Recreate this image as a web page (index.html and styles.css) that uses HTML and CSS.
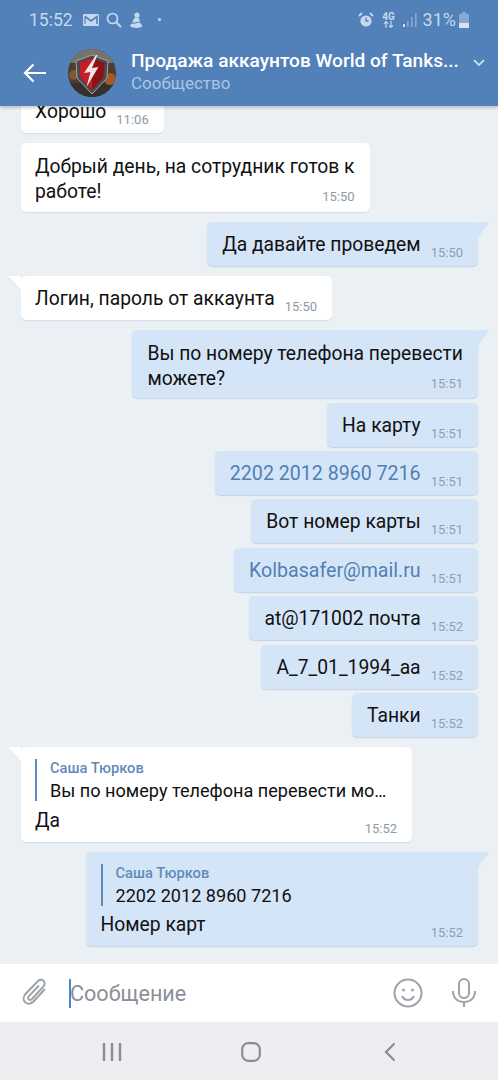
FILE: index.html
```html
<!DOCTYPE html>
<html lang="ru">
<head>
    <meta charset="UTF-8">
    <meta name="viewport" content="width=device-width, initial-scale=1.0">
    <title>Сообщения</title>
    <link rel="stylesheet" href="styles.css">
</head>
<body>
    <div class="app">
        <header class="header">
            <!-- Статус-бар -->
            <div class="status">
                <span class="status-time">15:52</span>
                <svg class="status-icon" width="16" height="12" viewBox="0 0 16 12"><path d="M1 0h14a1 1 0 0 1 1 1v10a1 1 0 0 1-1 1H1a1 1 0 0 1-1-1V1a1 1 0 0 1 1-1z" fill="#c6d8ee"/><path d="M2 2.500l6 4.500 6-4.500V10" fill="none" stroke="#5181b8" stroke-width="1.600"/><path d="M2 10V2.500" stroke="#5181b8" stroke-width="1.200"/></svg>
                <svg class="status-icon" width="16" height="16" viewBox="0 0 16 16"><circle cx="6.500" cy="6.500" r="5" fill="none" stroke="#c6d8ee" stroke-width="1.700"/><path d="M10 10l5 5" stroke="#c6d8ee" stroke-width="2"/></svg>
                <svg class="status-icon" width="14" height="16" viewBox="0 0 14 16"><circle cx="8" cy="3" r="2.600" fill="#c6d8ee"/><path d="M6.500 5.500h3c1 1.500 1.500 3.500 1.500 5l2.500 3.500c-1 1.300-3 2-6 2s-5.500-.7-6.500-2c.5-1.300 1.500-2.300 2.500-3 0-2 1-4 2.500-5.500z" fill="#c6d8ee"/><path d="M3 11.500l8-1.500" stroke="#5181b8" stroke-width="1"/></svg>
                <span class="status-dot"></span>
                <span class="status-spacer"></span>
                <svg class="status-icon" width="16" height="16" viewBox="0 0 16 16"><circle cx="8" cy="9" r="5.600" fill="#c6d8ee"/><path d="M8 5.500V9h2.600" fill="none" stroke="#5181b8" stroke-width="1.300"/><path d="M1 4l3-3M15 4l-3-3" stroke="#c6d8ee" stroke-width="1.800"/></svg>
                <span class="status-net">4G<svg width="11" height="7" viewBox="0 0 11 7"><path d="M3 7V1M1 2.600L3 .6l2 2M8 0v6M6 4.400l2 2 2-2" fill="none" stroke="#c6d8ee" stroke-width="1.200"/></svg></span>
                <svg class="status-icon" width="14" height="14" viewBox="0 0 14 14"><rect x="0" y="11" width="2" height="3" fill="#c6d8ee"/><rect x="4" y="8" width="1.600" height="6" fill="#86a8d2"/><rect x="8" y="4" width="1.600" height="10" fill="#86a8d2"/><rect x="12" y="0" width="1.600" height="14" fill="#86a8d2"/></svg>
                <span class="status-batt">31%</span>
                <svg width="10" height="16" viewBox="0 0 10 16"><path d="M3 0h4v2h3v14H0V2h3z" fill="#86a8d2"/><path d="M0 11h10v5H0z" fill="#d5e2f2"/></svg>
            </div>

            <!-- Шапка диалога -->
            <div class="toolbar">
                <svg class="back" width="24" height="20" viewBox="0 0 24 20"><path d="M23 10H2M10.500 1.500L2 10l8.500 8.500" fill="none" stroke="#fff" stroke-width="2.200"/></svg>
                <svg class="avatar" width="48" height="48" viewBox="0 0 48 48">
                    <defs><clipPath id="round"><circle cx="24" cy="24" r="24"/></clipPath></defs>
                    <g clip-path="url(#round)">
                        <rect width="48" height="48" fill="#4b3c34"/>
                        <rect width="48" height="14" fill="#77726e"/>
                        <rect y="34" width="48" height="14" fill="#35302c"/>
                        <circle cx="42" cy="30" r="6" fill="#a85a26"/>
                        <circle cx="6" cy="26" r="5" fill="#7d5a38"/>
                    </g>
                    <path d="M8 12l16-6 16 6-1 17-15 16-15-16z" fill="#4a4a4c" stroke="#a8a4a0" stroke-width="1"/>
                    <path d="M11.500 14l12.500-5 12.500 5-1 14-11.500 13-11.500-13z" fill="#8f1015"/>
                    <path d="M11.500 14l12.500-5v32l-11.500-13z" fill="#c41f26"/>
                    <path d="M28 6l-12 18 6.500-1-4 15 12-20-6.500 1 5.500-13z" fill="#ece6e2"/>
                </svg>
                <div class="peer">
                    <div class="peer-name">Продажа аккаунтов World of Tanks...</div>
                    <div class="peer-type">Сообщество</div>
                </div>
                <svg class="chevron" width="12" height="8" viewBox="0 0 12 8"><path d="M1 1l5 5 5-5" fill="none" stroke="#dbe6f3" stroke-width="1.700"/></svg>
            </div>
        </header>

        <main class="messages">
            <div class="msg in solid"><span class="text">Хорошо</span><span class="time">11:06</span></div>
            <div class="msg in solid stack"><span class="text">Добрый день, на сотрудник готов к<br>работе!</span><span class="time">15:50</span></div>
            <div class="msg out tail gap"><span class="text">Да давайте проведем</span><span class="time">15:50</span></div>
            <div class="msg in tail gap"><span class="text">Логин, пароль от аккаунта</span><span class="time">15:50</span></div>
            <div class="msg out tail gap stack"><span class="text">Вы по номеру телефона перевести<br>можете?</span><span class="time">15:51</span></div>
            <div class="msg out"><span class="text">На карту</span><span class="time">15:51</span></div>
            <div class="msg out"><span class="text link">2202 2012 8960 7216</span><span class="time">15:51</span></div>
            <div class="msg out"><span class="text">Вот номер карты</span><span class="time">15:51</span></div>
            <div class="msg out"><span class="text link">Kolbasafer@mail.ru</span><span class="time">15:51</span></div>
            <div class="msg out"><span class="text">at@171002 почта</span><span class="time">15:52</span></div>
            <div class="msg out"><span class="text">A_7_01_1994_aa</span><span class="time">15:52</span></div>
            <div class="msg out"><span class="text">Танки</span><span class="time">15:52</span></div>

            <div class="msg in tail gap wide-in reply-msg">
                <div class="reply">
                    <div class="reply-name">Саша Тюрков</div>
                    <div class="reply-text">Вы по номеру телефона перевести мо…</div>
                </div>
                <div class="reply-row"><span class="text">Да</span><span class="time">15:52</span></div>
            </div>
            <div class="msg out tail gap wide-out reply-msg">
                <div class="reply">
                    <div class="reply-name">Саша Тюрков</div>
                    <div class="reply-text">2202 2012 8960 7216</div>
                </div>
                <div class="reply-row"><span class="text">Номер карт</span><span class="time">15:52</span></div>
            </div>
        </main>

        <!-- Поле ввода -->
        <div class="composer">
            <svg class="clip" width="28" height="30" viewBox="0 0 28 30"><path d="M24 11L12.500 23.500c-2.500 2.700-6 3-8.300.8-2.300-2.200-2-5.800.5-8.500L16.500 3.500c1.800-2 4.400-2.200 6-.7 1.700 1.600 1.500 4.100-.3 6L11 21c-1 1.100-2.400 1.300-3.300.4-.9-.8-.8-2.200.2-3.300L18 7.500" fill="none" stroke="#9da3a9" stroke-width="2"/></svg>
            <div class="input"><span class="caret"></span>Сообщение</div>
            <svg class="smile" width="30" height="30" viewBox="0 0 30 30"><circle cx="15" cy="15" r="13.500" fill="none" stroke="#9da3a9" stroke-width="2"/><circle cx="10.500" cy="12" r="1.500" fill="#9da3a9"/><circle cx="19.500" cy="12" r="1.500" fill="#9da3a9"/><path d="M9 18c1.500 3 3.500 4 6 4s4.500-1 6-4" fill="none" stroke="#9da3a9" stroke-width="2"/></svg>
            <svg class="mic" width="26" height="30" viewBox="0 0 26 30"><rect x="8" y="1" width="10" height="19" rx="5" fill="none" stroke="#9da3a9" stroke-width="2"/><path d="M2 13c0 7 4.500 11 11 11s11-4 11-11M13 24v5" fill="none" stroke="#9da3a9" stroke-width="2"/></svg>
        </div>

        <!-- Навигация Android -->
        <nav class="navbar">
            <svg width="20" height="18" viewBox="0 0 20 18"><path d="M2 0v18M10 0v18M18 0v18" stroke="#8b8d91" stroke-width="2.400"/></svg>
            <svg class="nav-home" width="20" height="20" viewBox="0 0 20 20"><rect x="1.200" y="1.200" width="17.600" height="17.600" rx="6" fill="none" stroke="#8b8d91" stroke-width="2.200"/></svg>
            <svg width="12" height="20" viewBox="0 0 12 20"><path d="M10.500 1.500L2 10l8.500 8.500" fill="none" stroke="#8b8d91" stroke-width="2.200"/></svg>
        </nav>
    </div>
</body>
</html>
```

FILE: styles.css
```css
* {
    box-sizing: border-box;
}
body {
    margin: 0;
    background-color: #ebf0f5;
    font-family: Roboto, "Noto Sans", sans-serif;
}
.app {
    width: 498px;
    height: 1080px;
    display: flex;
    flex-direction: column;
    overflow: hidden;
}

/* header */
.header {
    height: 106px;
    flex: none;
    background-color: #5181b8;
    box-shadow: 0 2px 3px rgba(0, 0, 0, 0.2);
    position: relative;
    z-index: 2;
}
.status {
    height: 39px;
    padding: 0 29px;
    display: flex;
    align-items: center;
    color: #c6d8ee;
}
.status-time {
    font-size: 17.5px;
    margin-right: 10px;
}
.status-icon {
    margin-right: 7px;
}
.status-dot {
    width: 3px;
    height: 3px;
    border-radius: 50%;
    background-color: #c6d8ee;
    margin-left: 8px;
}
.status-spacer {
    flex: 1;
}
.status-net {
    font-size: 10px;
    font-weight: 700;
    line-height: 9px;
    width: 16px;
    margin-right: 6px;
    display: flex;
    flex-direction: column;
    align-items: center;
}
.status-batt {
    font-size: 18px;
    margin: 0 3px 0 -1px;
}
.toolbar {
    height: 67px;
    padding: 0 13px 0 23px;
    display: flex;
    align-items: center;
}
.back {
    flex: none;
    margin-right: 21px;
}
.avatar {
    flex: none;
    margin-right: 15px;
}
.peer {
    flex: 1;
    min-width: 0;
    margin-top: -3px;
}
.peer-name {
    color: #fff;
    font-size: 19.1px;
    font-weight: 500;
    line-height: 24px;
    white-space: nowrap;
}
.peer-type {
    color: #a9c5e6;
    font-size: 17px;
    line-height: 20px;
}
.chevron {
    flex: none;
    margin-top: -20px;
}

/* messages */
.messages {
    flex: 1;
    min-height: 0;
    padding: 0 20px 18px 21px;
    display: flex;
    flex-direction: column;
    align-items: flex-start;
    justify-content: flex-end;
    overflow: hidden;
}
.msg {
    flex: none;
    position: relative;
    display: flex;
    align-items: flex-end;
    gap: 10px;
    min-height: 44px;
    padding: 10px 15px 6px 15px;
    margin-top: 4.4px;
    border-radius: 5px;
    font-size: 19.3px;
    line-height: 26px;
    color: #111;
}
.msg.gap,
.msg.solid {
    margin-top: 10px;
}
.in {
    padding-left: 14px;
    background-color: #fff;
    box-shadow: 0 1px 1px rgba(160, 175, 195, 0.3);
}
.out {
    align-self: flex-end;
    background-color: #d5e5f8;
    box-shadow: 0 1px 1px rgba(130, 155, 190, 0.35);
}
.tail::before {
    content: "";
    position: absolute;
    top: 0;
    width: 13px;
    background-color: inherit;
}
.in.tail::before {
    left: -13px;
    height: 14px;
    clip-path: polygon(0 0, 100% 0, 100% 100%, 55% 50%);
}
.out.tail::before {
    right: -12px;
    height: 18px;
    clip-path: polygon(0 0, 100% 0, 45% 50%, 0 100%);
}
.text {
    align-self: flex-start;
}
.time {
    flex: none;
    color: #8f9aa5;
    font-size: 13px;
    line-height: 16px;
    margin-bottom: -1px;
    white-space: nowrap;
}
.out .time {
    color: #8f9fb0;
}
.link {
    color: #4f80b5;
    font-size: 19.6px;
}
.stack {
    display: block;
    padding-top: 11px;
    padding-bottom: 6.5px;
    line-height: 25px;
}
.stack > .time {
    display: block;
    text-align: right;
    margin: -15px 0 0;
}

/* reply */
.reply-msg {
    display: block;
    padding-top: 12px;
}
.wide-in {
    width: 391px;
}
.wide-out {
    width: 392px;
    padding-left: 14.5px;
}
.reply {
    border-left: 2px solid #5f8bbb;
    padding-left: 13px;
    height: 42px;
    margin-bottom: 6.5px;
}
.reply-name {
    color: #5f8bbb;
    font-size: 14.7px;
    font-weight: 500;
    line-height: 18px;
}
.reply-text {
    font-size: 18.1px;
    line-height: 28px;
    white-space: nowrap;
}
.reply-row {
    height: 28px;
    display: flex;
    justify-content: space-between;
    align-items: flex-end;
    line-height: 26px;
}

/* composer */
.composer {
    height: 58px;
    flex: none;
    background-color: #fff;
    padding: 0 21px;
    display: flex;
    align-items: center;
}
.input {
    flex: 1;
    margin-left: 20px;
    display: flex;
    align-items: center;
    color: #8a9097;
    font-size: 21.6px;
}
.caret {
    width: 2px;
    height: 29px;
    margin-right: -1px;
    background-color: #4f86c6;
}
.smile {
    margin-right: 28px;
}

/* navbar */
.navbar {
    height: 58px;
    flex: none;
    background-color: #eceef2;
    padding: 2px 102px 0;
    display: flex;
    align-items: center;
    justify-content: space-between;
}
.nav-home {
    margin-left: -4px;
}
```
